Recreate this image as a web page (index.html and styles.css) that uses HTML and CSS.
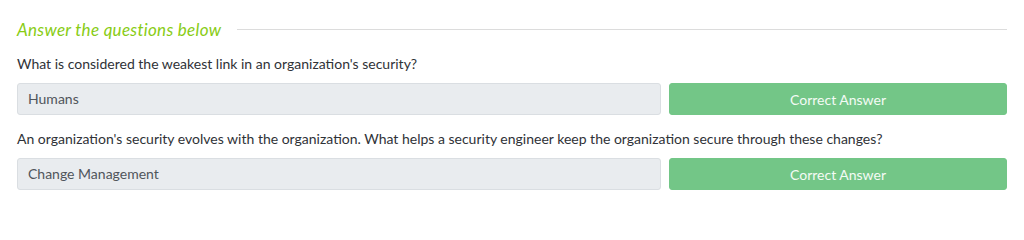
FILE: index.html
```html
<!DOCTYPE html>
<html lang="en">
<head>
<meta charset="utf-8">
<title>Answer the questions below</title>
<link rel="stylesheet" href="styles.css">
</head>
<body>
<section class="questions">
  <div class="questions-header">
    <h3 class="questions-title">Answer the questions below</h3>
    <span class="questions-rule"></span>
  </div>
  <div class="question">
    <p class="question-text">What is considered the weakest link in an organization's security?</p>
    <div class="answer-row">
      <div class="answer-input">Humans</div>
      <button class="answer-btn" type="button">Correct Answer</button>
    </div>
  </div>
  <div class="question">
    <p class="question-text">An organization's security evolves with the organization. What helps a security engineer keep the organization secure through these changes?</p>
    <div class="answer-row">
      <div class="answer-input">Change Management</div>
      <button class="answer-btn" type="button">Correct Answer</button>
    </div>
  </div>
</section>
</body>
</html>
```
FILE: styles.css
```css
html, body {
  margin: 0;
  padding: 0;
  background: #ffffff;
}
body {
  font-family: "Lato", "Open Sans", sans-serif;
  font-size: 14px;
  color: #2f3237;
}
.questions {
  padding: 18px 17px 0 17px;
}
.questions-header {
  display: flex;
  align-items: center;
  gap: 16px;
  margin-bottom: 11px;
}
.questions-title {
  margin: 0;
  font-size: 17px;
  line-height: 24px;
  font-style: italic;
  font-weight: 400;
  letter-spacing: 0.3px;
  color: #88cc14;
  white-space: nowrap;
}
.questions-rule {
  flex: 1;
  height: 1px;
  margin-top: -1px;
  background: #dcdcdc;
}
.question {
  margin-bottom: 13px;
}
.question-text {
  margin: 0 0 9px 0;
  line-height: 21px;
}
.answer-row {
  display: grid;
  grid-template-columns: 1fr 338px;
  gap: 8px;
}
.answer-input {
  box-sizing: border-box;
  height: 32px;
  line-height: 30px;
  padding: 0 10px;
  background: #e9ecef;
  border: 1px solid #dadee2;
  border-radius: 3px;
  color: #50555b;
}
.answer-btn {
  box-sizing: border-box;
  height: 32px;
  margin: 0;
  padding: 0;
  border: 1px solid #73c687;
  border-radius: 3px;
  background: #73c687;
  color: #f4fbf5;
  font-family: inherit;
  font-size: 14px;
}
```
